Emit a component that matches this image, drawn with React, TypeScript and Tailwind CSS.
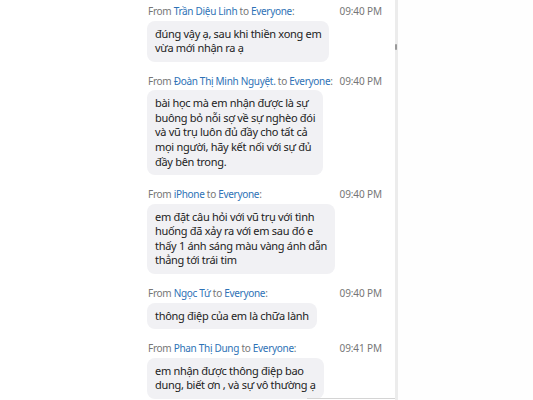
import React from "react";

type Msg = { from: string; time: string; lines: string[] };

const msgs: Msg[] = [
  { from: "Trần Diệu Linh", time: "09:40 PM", lines: ["đúng vậy ạ, sau khi thiền xong em", "vừa mới nhận ra ạ"] },
  {
    from: "Đoàn Thị Minh Nguyệt.",
    time: "09:40 PM",
    lines: [
      "bài học mà em nhận được là sự",
      "buông bỏ nỗi sợ về sự nghèo đói",
      "và vũ trụ luôn đủ đầy cho tất cả",
      "mọi người, hãy kết nối với sự đủ",
      "đầy bên trong.",
    ],
  },
  {
    from: "iPhone",
    time: "09:40 PM",
    lines: [
      "em đặt câu hỏi với vũ trụ với tình",
      "huống đã xảy ra với em sau đó e",
      "thấy 1 ánh sáng màu vàng ánh dẫn",
      "thẳng tới trái tim",
    ],
  },
  { from: "Ngọc Tứ", time: "09:40 PM", lines: ["thông điệp của em là chữa lành"] },
  { from: "Phan Thị Dung", time: "09:41 PM", lines: ["em nhận được thông điệp bao", "dung, biết ơn , và sự vô thường ạ"] },
];

export default function App() {
  return (
    <div
      className="w-[533px] h-[400px] overflow-hidden bg-white flex relative"
      style={{ fontFamily: '"Noto Sans", "Open Sans", sans-serif' }}
    >
      <div className="w-[395px] h-full pl-[147px] pr-[12px] pt-[4px] flex flex-col">
        {msgs.map((m, i) => (
          <div key={i} className="flex flex-col mb-[12px]">
            <div className="flex items-center justify-between h-[14px] text-[10px] leading-[14px] tracking-[-0.3px] pl-[1px] whitespace-nowrap">
              <span className="text-[#767676]">
                From <span className="text-[#2e72b6]">{m.from}</span> to{" "}
                <span className="text-[#2e72b6]">Everyone</span>:
              </span>
              <span className="text-[#767676] pr-[1px] tracking-[-0.1px]">{m.time}</span>
            </div>
            <div className="mt-[2.5px] self-start bg-[#f1f1f4] rounded-[8px] px-[8px] py-[6px] text-[11px] leading-[14.6px] tracking-[-0.3px] text-[#222222]">
              {m.lines.map((l, j) => (
                <div key={j} className="whitespace-nowrap">
                  {l}
                </div>
              ))}
            </div>
          </div>
        ))}
      </div>
      <div className="w-[3px] h-full bg-[#ececec] relative">
        <div className="absolute left-0 top-[44px] w-[2px] h-[6px] bg-[#9a9a9a] rounded-[1px]" />
      </div>
      <div className="flex-1 h-full bg-[#fefefe]" />
      <div className="absolute left-[307px] top-[398px] w-[88px] h-[1px] bg-[#d4d4d4]" />
    </div>
  );
}
